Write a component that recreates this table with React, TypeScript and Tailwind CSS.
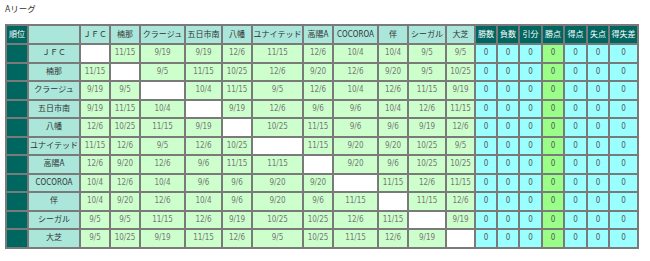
import React from "react";

const teams = ["ＪＦＣ", "楠那", "クラージュ", "五日市南", "八幡", "ユナイテッド", "高陽A", "COCOROA", "伴", "シーガル", "大芝"];

const dates: string[][] = [
  ["", "11/15", "9/19", "9/19", "12/6", "11/15", "12/6", "10/4", "10/4", "9/5", "9/5"],
  ["11/15", "", "9/5", "11/15", "10/25", "12/6", "9/20", "12/6", "9/20", "9/5", "10/25"],
  ["9/19", "9/5", "", "10/4", "11/15", "9/5", "12/6", "10/4", "12/6", "11/15", "9/19"],
  ["9/19", "11/15", "10/4", "", "9/19", "12/6", "9/6", "9/6", "10/4", "12/6", "11/15"],
  ["12/6", "10/25", "11/15", "9/19", "", "10/25", "11/15", "9/6", "9/6", "9/19", "12/6"],
  ["11/15", "12/6", "9/5", "12/6", "10/25", "", "11/15", "9/20", "9/20", "10/25", "9/5"],
  ["12/6", "9/20", "12/6", "9/6", "11/15", "11/15", "", "9/20", "9/6", "10/25", "10/25"],
  ["10/4", "12/6", "10/4", "9/6", "9/6", "9/20", "9/20", "", "11/15", "12/6", "11/15"],
  ["10/4", "9/20", "12/6", "10/4", "9/6", "9/20", "9/6", "11/15", "", "11/15", "12/6"],
  ["9/5", "9/5", "11/15", "12/6", "9/19", "10/25", "10/25", "12/6", "11/15", "", "9/19"],
  ["9/5", "10/25", "9/19", "11/15", "12/6", "9/5", "10/25", "11/15", "12/6", "9/19", ""],
];

const stats = ["勝数", "負数", "引分", "勝点", "得点", "失点", "得失差"];
const widths = [22, 52, 30, 30, 45, 37, 30, 51, 30, 45, 30, 38, 29, 22, 22, 23, 22, 23, 22, 29];

const cell = "border border-[#7a7a7a] p-0 text-center align-middle whitespace-nowrap overflow-hidden";

export default function App() {
  return (
    <div
      className="w-[650px] h-[261px] bg-white px-[5px] pt-[3px] text-[8px] text-[#333]"
      style={{ fontFamily: '"DejaVu Sans Condensed", "Liberation Sans", "Noto Sans CJK JP", sans-serif' }}
    >
      <div className="text-[8.5px] leading-[12px] h-[12px]">Aリーグ</div>
      <table className="mt-[9px] table-fixed border-separate border-spacing-0 border border-[#7a7a7a] w-[634px]">
        <colgroup>
          {widths.map((w, i) => (
            <col key={i} style={{ width: w }} />
          ))}
        </colgroup>
        <thead>
          <tr className="h-[19px]">
            <th className={`${cell} bg-[#006660] text-white font-normal`}>順位</th>
            <th className={`${cell} bg-[#aae6da] font-normal`}></th>
            {teams.map((t) => (
              <th key={t} className={`${cell} bg-[#aae6da] font-normal text-[#333]`}>{t}</th>
            ))}
            {stats.map((s) => (
              <th key={s} className={`${cell} bg-[#006660] text-white font-normal`}>{s}</th>
            ))}
          </tr>
        </thead>
        <tbody>
          {teams.map((t, r) => (
            <tr key={t} className="h-[18.5px]">
              <td className={`${cell} bg-[#006660]`}></td>
              <td className={`${cell} bg-[#aae6da] text-[#333]`}>{t}</td>
              {dates[r].map((d, c) => (
                <td key={c} className={`${cell} ${d ? "bg-[#ccffcc]" : "bg-white"} text-[#777]`}>{d}</td>
              ))}
              {stats.map((s) => (
                <td key={s} className={`${cell} ${s === "勝点" ? "bg-[#99ff88]" : "bg-[#99ffff]"} text-[#555]`}>0</td>
              ))}
            </tr>
          ))}
        </tbody>
      </table>
    </div>
  );
}
